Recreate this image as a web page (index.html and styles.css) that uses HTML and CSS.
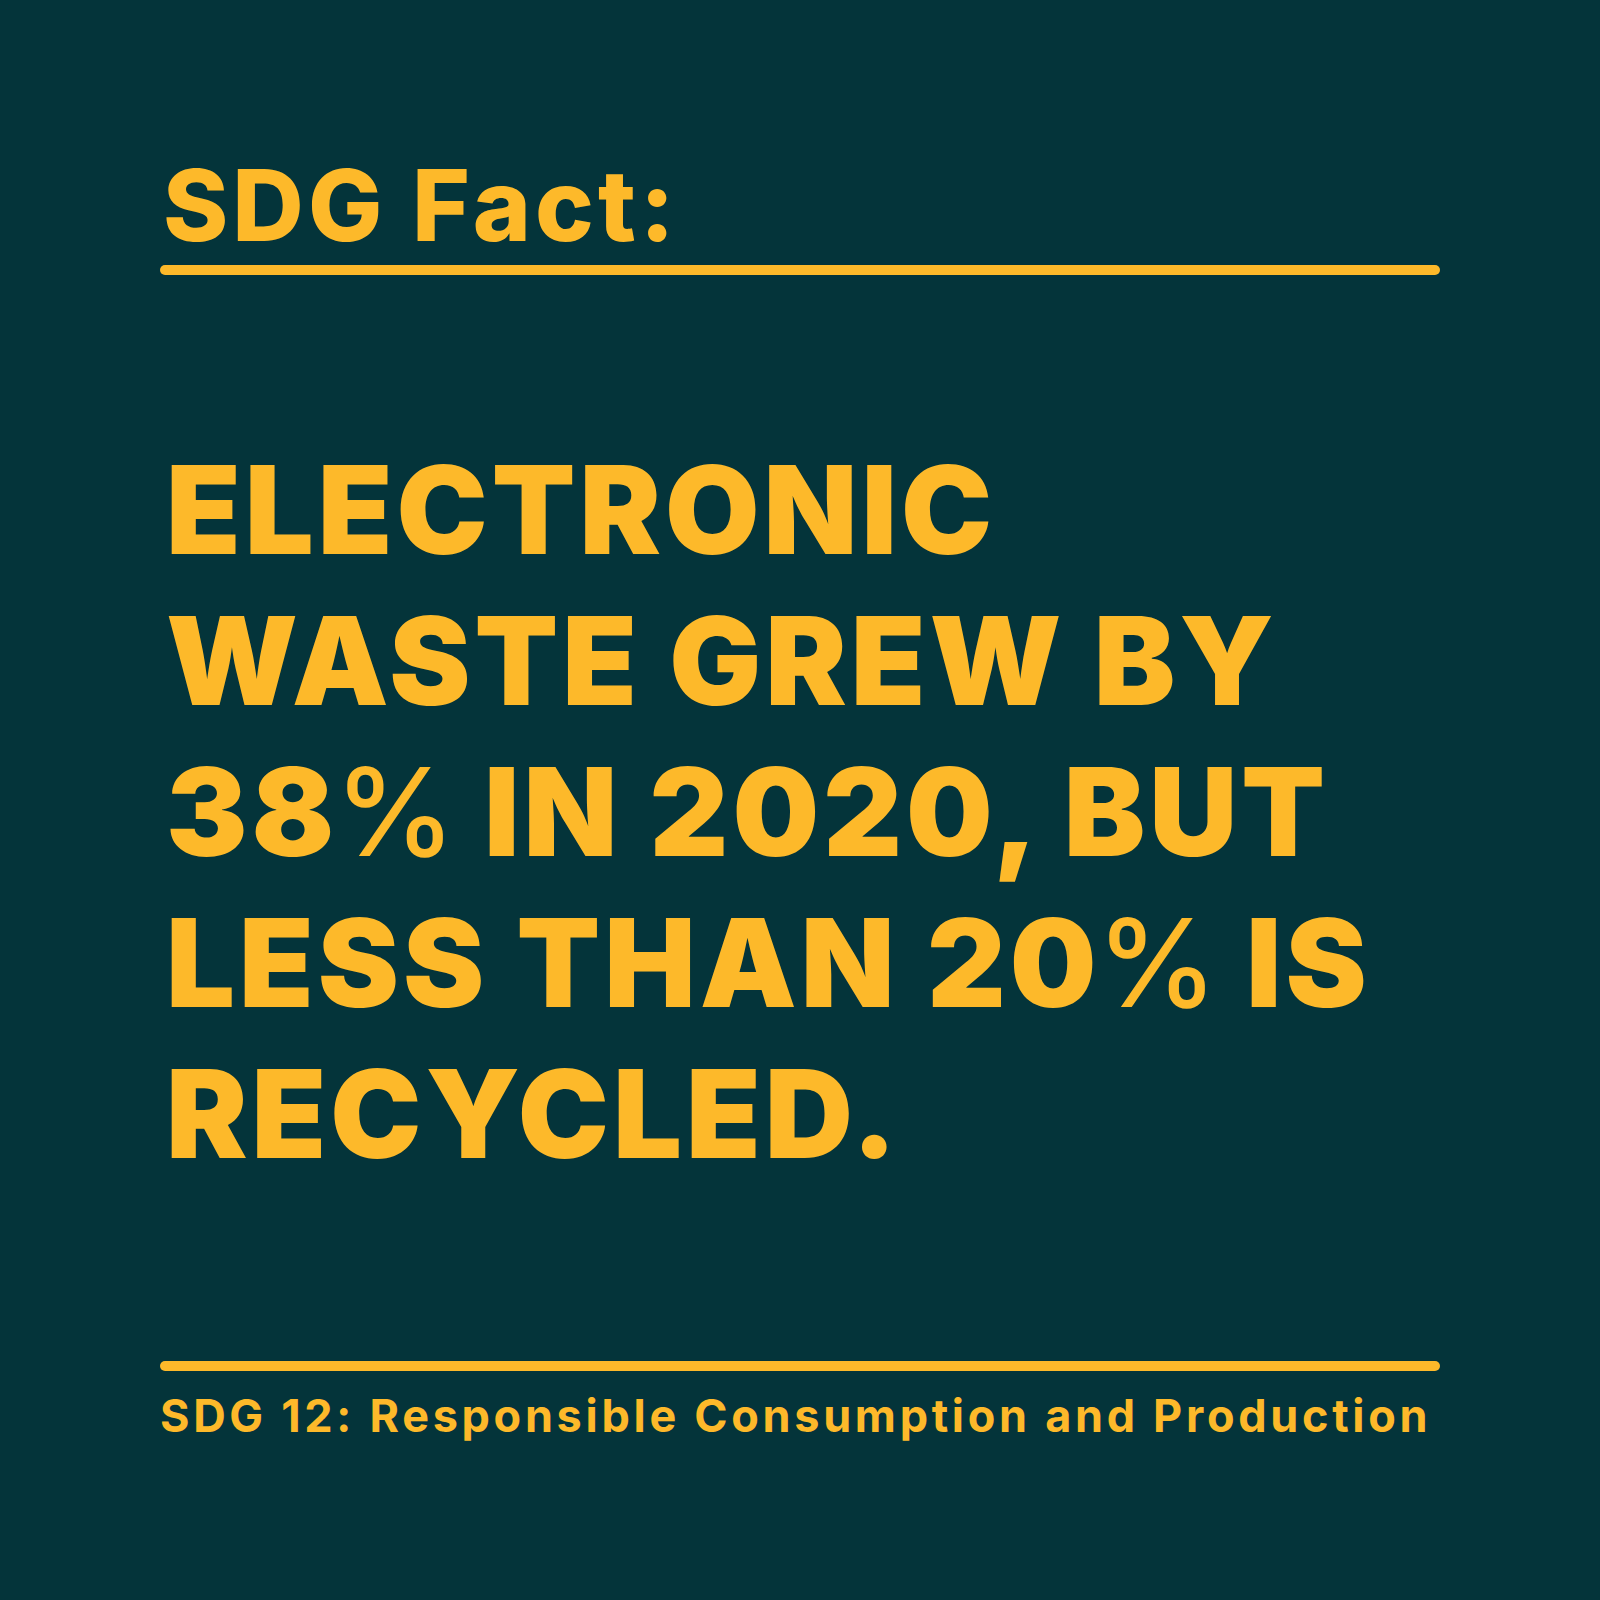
FILE: index.html
```html
<!DOCTYPE html>
<html lang="en">
<head>
<meta charset="utf-8">
<title>SDG Fact</title>
<link rel="stylesheet" href="styles.css">
</head>
<body>
<main class="card">
  <header class="head">
    <h1 class="title">SDG Fact:</h1>
    <div class="rule"></div>
  </header>
  <p class="fact">Electronic<br>waste grew by<br>38<span class="pct">%</span> in 2020, but<br>less than 20<span class="pct">%</span> is<br>recycled.</p>
  <footer class="foot">
    <div class="rule"></div>
    <p class="source">SDG 12: Responsible Consumption and Production</p>
  </footer>
</main>
</body>
</html>
```

FILE: styles.css
```css
html, body {
  margin: 0;
  padding: 0;
  background: #04343a;
}
.card {
  width: 1600px;
  height: 1600px;
  box-sizing: border-box;
  padding: 0 160px;
  display: flex;
  flex-direction: column;
  color: #fdb92a;
  font-family: Inter, "Liberation Sans", sans-serif;
}
.head {
  padding-top: 145px;
}
.title {
  margin: 0;
  font-size: 99px;
  font-weight: 800;
  line-height: 120px;
  letter-spacing: 4px;
  padding-left: 3px;
}
.rule {
  height: 10px;
  border-radius: 5px;
  background: #fdb92a;
}
.fact {
  margin: 159px 0 0;
  padding-left: 6px;
  font-size: 122px;
  font-weight: 900;
  line-height: 151px;
  text-transform: uppercase;
  letter-spacing: 4px;
}
.pct {
  font-weight: 500;
  letter-spacing: 0;
  margin-left: -4px;
}
.foot {
  margin-top: auto;
  padding-bottom: 154px;
}
.source {
  margin: 15px 0 0;
  font-size: 45px;
  font-weight: 700;
  line-height: 60px;
  letter-spacing: 3.7px;
}
```
